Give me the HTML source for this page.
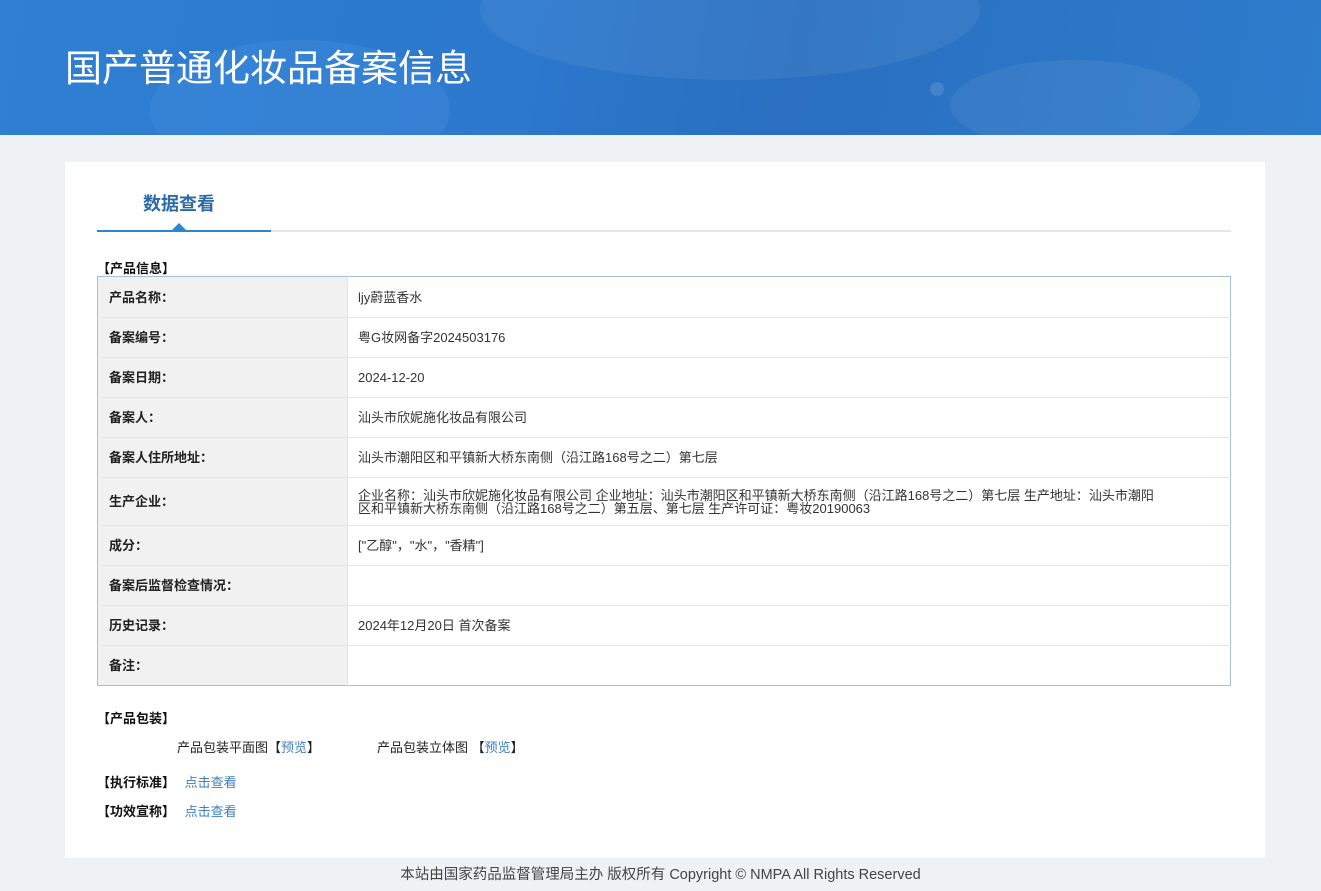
<!DOCTYPE html>
<html><head><meta charset="utf-8"><style>
*{margin:0;padding:0;box-sizing:border-box}
body{width:1321px;height:891px;background:#eef2f5;font-family:"Liberation Sans","Noto Sans CJK SC",sans-serif;font-size:13px;color:#333;position:relative;overflow:hidden}
.hd{position:absolute;left:0;top:0;width:1321px;height:135px;background:linear-gradient(100deg,#2f7fd3 0%,#2b78cc 40%,#2a6fc0 60%,#2e7ccd 100%);overflow:hidden}
.hd h1{position:absolute;left:65px;top:38px;color:#fff;font-size:37px;font-weight:normal;font-family:"Noto Sans CJK SC",sans-serif}
.card{position:absolute;left:65px;top:162px;width:1200px;height:696px;background:#fff}
.tab{position:absolute;left:32px;top:68px;width:1134px;height:2px;background:#e3e6ea}
.tab i{position:absolute;left:0;top:0;width:174px;height:2px;background:#2a86d0}
.tab b{position:absolute;left:75px;top:-7px;border:7px solid transparent;border-bottom-color:#2a86d0;border-top:0}
.tt{position:absolute;left:78px;top:28px;font-size:18px;font-weight:bold;color:#2b6aa8}
.sec{position:absolute;font-weight:bold;color:#111;font-size:13px}
table{position:absolute;left:32px;top:114px;width:1134px;border-collapse:collapse;border:1px solid #a6bed8}
td{border-bottom:1px solid #e6e6e6;height:40px;padding:0 50px 0 10px;font-size:13px;line-height:13px}
td.l{width:250px;background:#f1f1f1;font-weight:bold;color:#222;border-right:1px solid #e3e3e3;padding-left:11px}
a{color:#3d7fbf;text-decoration:none}
.ft{position:absolute;top:863px;left:0;width:1321px;text-align:center;font-size:14.5px;color:#444}
</style></head><body>
<div class="hd">
<div style="position:absolute;left:480px;top:-60px;width:500px;height:140px;border-radius:50%;background:rgba(255,255,255,.06)"></div>
<div style="position:absolute;left:150px;top:40px;width:300px;height:140px;border-radius:50%;background:rgba(80,150,230,.25)"></div>
<div style="position:absolute;left:950px;top:60px;width:250px;height:90px;border-radius:50%;background:rgba(255,255,255,.06)"></div>
<div style="position:absolute;left:930px;top:82px;width:14px;height:14px;border-radius:50%;background:rgba(255,255,255,.12)"></div>
<h1>国产普通化妆品备案信息</h1></div>
<div class="card">
<div class="tt">数据查看</div>
<div class="tab"><i></i><b></b></div>
<div class="sec" style="left:32px;top:96px">【产品信息】</div>
<table>
<tr><td class="l" style="height:41px">产品名称：</td><td>ljy蔚蓝香水</td></tr>
<tr><td class="l">备案编号：</td><td>粤G妆网备字2024503176</td></tr>
<tr><td class="l">备案日期：</td><td>2024-12-20</td></tr>
<tr><td class="l">备案人：</td><td>汕头市欣妮施化妆品有限公司</td></tr>
<tr><td class="l">备案人住所地址：</td><td>汕头市潮阳区和平镇新大桥东南侧（沿江路168号之二）第七层</td></tr>
<tr><td class="l" style="height:48px">生产企业：</td><td>企业名称：汕头市欣妮施化妆品有限公司 企业地址：汕头市潮阳区和平镇新大桥东南侧（沿江路168号之二）第七层 生产地址：汕头市潮阳<br>区和平镇新大桥东南侧（沿江路168号之二）第五层、第七层 生产许可证：粤妆20190063</td></tr>
<tr><td class="l">成分：</td><td>["乙醇"，"水"，"香精"]</td></tr>
<tr><td class="l">备案后监督检查情况：</td><td></td></tr>
<tr><td class="l">历史记录：</td><td>2024年12月20日 首次备案</td></tr>
<tr><td class="l" style="border-bottom:0">备注：</td><td style="border-bottom:0"></td></tr>
</table>
<div class="sec" style="left:32px;top:546px">【产品包装】</div>
<div style="position:absolute;left:112px;top:575px;color:#222">产品包装平面图【<a>预览</a>】</div>
<div style="position:absolute;left:312px;top:575px;color:#222">产品包装立体图 【<a>预览</a>】</div>
<div class="sec" style="left:32px;top:610px">【执行标准】 <a style="font-weight:normal;margin-left:6px">点击查看</a></div>
<div class="sec" style="left:32px;top:639px">【功效宣称】 <a style="font-weight:normal;margin-left:6px">点击查看</a></div>
</div>
<div class="ft">本站由国家药品监督管理局主办 版权所有 Copyright © NMPA All Rights Reserved</div>
</body></html>
